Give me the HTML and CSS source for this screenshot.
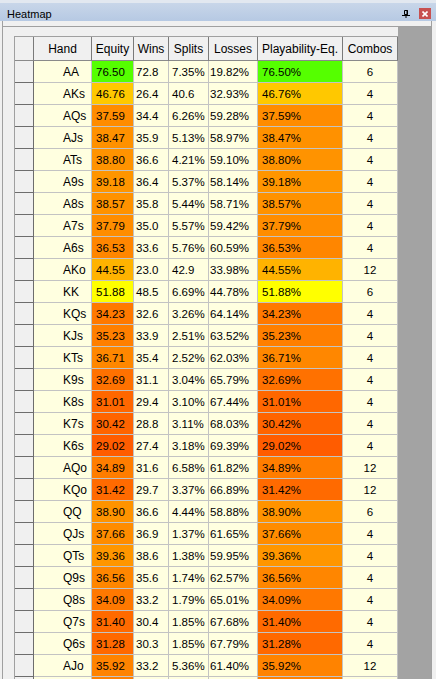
FILE: index.html
```html
<!DOCTYPE html>
<html>
<head>
<meta charset="utf-8">
<link rel="stylesheet" href="styles.css">
</head>
<body>
<div class="topstrip"></div>
<div class="titlebar">
  <span class="title">Heatmap</span>
  <svg class="pin" width="8" height="8" viewBox="0 0 8 8"><path d="M2.5 0.5h3v4h-3z" fill="none" stroke="#000"/><path d="M5 0v5" stroke="#000" stroke-width="1"/><path d="M0 5.5h8M4 6v2" stroke="#000"/></svg>
  <span class="close"><svg width="6" height="6" viewBox="0 0 6 6"><path d="M0.5 0.5l5 5M5.5 0.5l-5 5" stroke="#fff" stroke-width="1.6"/></svg></span>
</div>
<div class="frame">
  <div class="gridhost">
    <div class="gridpad">
      <div class="table">
        <div class="h corner"></div><div class="h">Hand</div><div class="h">Equity</div><div class="h">Wins</div><div class="h">Splits</div><div class="h">Losses</div><div class="h">Playability-Eq.</div><div class="h">Combos</div>

        <div class="rh"></div><div class="c hand">AA</div><div class="c eq" style="background:#55ff00">76.50</div><div class="c w">72.8</div><div class="c s">7.35%</div><div class="c l">19.82%</div><div class="c eq" style="background:#55ff00">76.50%</div><div class="c cb">6</div>
        <div class="rh"></div><div class="c hand">AKs</div><div class="c eq" style="background:#ffc800">46.76</div><div class="c w">26.4</div><div class="c s">40.6</div><div class="c l">32.93%</div><div class="c eq" style="background:#ffc800">46.76%</div><div class="c cb">4</div>
        <div class="rh"></div><div class="c hand">AQs</div><div class="c eq" style="background:#ff8c00">37.59</div><div class="c w">34.4</div><div class="c s">6.26%</div><div class="c l">59.28%</div><div class="c eq" style="background:#ff8c00">37.59%</div><div class="c cb">4</div>
        <div class="rh"></div><div class="c hand">AJs</div><div class="c eq" style="background:#ff9100">38.47</div><div class="c w">35.9</div><div class="c s">5.13%</div><div class="c l">58.97%</div><div class="c eq" style="background:#ff9100">38.47%</div><div class="c cb">4</div>
        <div class="rh"></div><div class="c hand">ATs</div><div class="c eq" style="background:#ff9300">38.80</div><div class="c w">36.6</div><div class="c s">4.21%</div><div class="c l">59.10%</div><div class="c eq" style="background:#ff9300">38.80%</div><div class="c cb">4</div>
        <div class="rh"></div><div class="c hand">A9s</div><div class="c eq" style="background:#ff9500">39.18</div><div class="c w">36.4</div><div class="c s">5.37%</div><div class="c l">58.14%</div><div class="c eq" style="background:#ff9500">39.18%</div><div class="c cb">4</div>
        <div class="rh"></div><div class="c hand">A8s</div><div class="c eq" style="background:#ff9200">38.57</div><div class="c w">35.8</div><div class="c s">5.44%</div><div class="c l">58.71%</div><div class="c eq" style="background:#ff9200">38.57%</div><div class="c cb">4</div>
        <div class="rh"></div><div class="c hand">A7s</div><div class="c eq" style="background:#ff8d00">37.79</div><div class="c w">35.0</div><div class="c s">5.57%</div><div class="c l">59.42%</div><div class="c eq" style="background:#ff8d00">37.79%</div><div class="c cb">4</div>
        <div class="rh"></div><div class="c hand">A6s</div><div class="c eq" style="background:#ff8600">36.53</div><div class="c w">33.6</div><div class="c s">5.76%</div><div class="c l">60.59%</div><div class="c eq" style="background:#ff8600">36.53%</div><div class="c cb">4</div>
        <div class="rh"></div><div class="c hand">AKo</div><div class="c eq" style="background:#ffb300">44.55</div><div class="c w">23.0</div><div class="c s">42.9</div><div class="c l">33.98%</div><div class="c eq" style="background:#ffb300">44.55%</div><div class="c cb">12</div>
        <div class="rh"></div><div class="c hand">KK</div><div class="c eq" style="background:#ffff00">51.88</div><div class="c w">48.5</div><div class="c s">6.69%</div><div class="c l">44.78%</div><div class="c eq" style="background:#ffff00">51.88%</div><div class="c cb">6</div>
        <div class="rh"></div><div class="c hand">KQs</div><div class="c eq" style="background:#ff7900">34.23</div><div class="c w">32.6</div><div class="c s">3.26%</div><div class="c l">64.14%</div><div class="c eq" style="background:#ff7900">34.23%</div><div class="c cb">4</div>
        <div class="rh"></div><div class="c hand">KJs</div><div class="c eq" style="background:#ff7f00">35.23</div><div class="c w">33.9</div><div class="c s">2.51%</div><div class="c l">63.52%</div><div class="c eq" style="background:#ff7f00">35.23%</div><div class="c cb">4</div>
        <div class="rh"></div><div class="c hand">KTs</div><div class="c eq" style="background:#ff8700">36.71</div><div class="c w">35.4</div><div class="c s">2.52%</div><div class="c l">62.03%</div><div class="c eq" style="background:#ff8700">36.71%</div><div class="c cb">4</div>
        <div class="rh"></div><div class="c hand">K9s</div><div class="c eq" style="background:#ff7100">32.69</div><div class="c w">31.1</div><div class="c s">3.04%</div><div class="c l">65.79%</div><div class="c eq" style="background:#ff7100">32.69%</div><div class="c cb">4</div>
        <div class="rh"></div><div class="c hand">K8s</div><div class="c eq" style="background:#ff6700">31.01</div><div class="c w">29.4</div><div class="c s">3.10%</div><div class="c l">67.44%</div><div class="c eq" style="background:#ff6700">31.01%</div><div class="c cb">4</div>
        <div class="rh"></div><div class="c hand">K7s</div><div class="c eq" style="background:#ff6400">30.42</div><div class="c w">28.8</div><div class="c s">3.11%</div><div class="c l">68.03%</div><div class="c eq" style="background:#ff6400">30.42%</div><div class="c cb">4</div>
        <div class="rh"></div><div class="c hand">K6s</div><div class="c eq" style="background:#ff5c00">29.02</div><div class="c w">27.4</div><div class="c s">3.18%</div><div class="c l">69.39%</div><div class="c eq" style="background:#ff5c00">29.02%</div><div class="c cb">4</div>
        <div class="rh"></div><div class="c hand">AQo</div><div class="c eq" style="background:#ff7d00">34.89</div><div class="c w">31.6</div><div class="c s">6.58%</div><div class="c l">61.82%</div><div class="c eq" style="background:#ff7d00">34.89%</div><div class="c cb">12</div>
        <div class="rh"></div><div class="c hand">KQo</div><div class="c eq" style="background:#ff6a00">31.42</div><div class="c w">29.7</div><div class="c s">3.37%</div><div class="c l">66.89%</div><div class="c eq" style="background:#ff6a00">31.42%</div><div class="c cb">12</div>
        <div class="rh"></div><div class="c hand">QQ</div><div class="c eq" style="background:#ff9300">38.90</div><div class="c w">36.6</div><div class="c s">4.44%</div><div class="c l">58.88%</div><div class="c eq" style="background:#ff9300">38.90%</div><div class="c cb">6</div>
        <div class="rh"></div><div class="c hand">QJs</div><div class="c eq" style="background:#ff8c00">37.66</div><div class="c w">36.9</div><div class="c s">1.37%</div><div class="c l">61.65%</div><div class="c eq" style="background:#ff8c00">37.66%</div><div class="c cb">4</div>
        <div class="rh"></div><div class="c hand">QTs</div><div class="c eq" style="background:#ff9600">39.36</div><div class="c w">38.6</div><div class="c s">1.38%</div><div class="c l">59.95%</div><div class="c eq" style="background:#ff9600">39.36%</div><div class="c cb">4</div>
        <div class="rh"></div><div class="c hand">Q9s</div><div class="c eq" style="background:#ff8600">36.56</div><div class="c w">35.6</div><div class="c s">1.74%</div><div class="c l">62.57%</div><div class="c eq" style="background:#ff8600">36.56%</div><div class="c cb">4</div>
        <div class="rh"></div><div class="c hand">Q8s</div><div class="c eq" style="background:#ff7800">34.09</div><div class="c w">33.2</div><div class="c s">1.79%</div><div class="c l">65.01%</div><div class="c eq" style="background:#ff7800">34.09%</div><div class="c cb">4</div>
        <div class="rh"></div><div class="c hand">Q7s</div><div class="c eq" style="background:#ff6a00">31.40</div><div class="c w">30.4</div><div class="c s">1.85%</div><div class="c l">67.68%</div><div class="c eq" style="background:#ff6a00">31.40%</div><div class="c cb">4</div>
        <div class="rh"></div><div class="c hand">Q6s</div><div class="c eq" style="background:#ff6900">31.28</div><div class="c w">30.3</div><div class="c s">1.85%</div><div class="c l">67.79%</div><div class="c eq" style="background:#ff6900">31.28%</div><div class="c cb">4</div>
        <div class="rh"></div><div class="c hand">AJo</div><div class="c eq" style="background:#ff8300">35.92</div><div class="c w">33.2</div><div class="c s">5.36%</div><div class="c l">61.40%</div><div class="c eq" style="background:#ff8300">35.92%</div><div class="c cb">12</div>
        <div class="rh"></div><div class="c hand"></div><div class="c eq" style="background:#ff8000"></div><div class="c w"></div><div class="c s"></div><div class="c l"></div><div class="c eq" style="background:#ff8000"></div><div class="c cb"></div>
      </div>
    </div>
    <div class="gridfill"></div>
  </div>
</div>
</body>
</html>
```

FILE: styles.css
```css
html, body {
  margin: 0;
  padding: 0;
}
body {
  width: 436px;
  height: 679px;
  overflow: hidden;
  background: #f0f0f0;
  font-family: "Liberation Sans", Arial, sans-serif;
  color: #000;
}
.topstrip {
  height: 3px;
  background: #e2e8f0;
}
.titlebar {
  height: 18px;
  background: linear-gradient(to bottom, #c8d6e9, #b6c9e3);
  display: flex;
  align-items: flex-start;
  padding: 0 5px 0 7px;
}
.title {
  font-size: 11px;
  line-height: 13px;
  padding-top: 5px;
}
.pin {
  margin-left: auto;
  margin-top: 7px;
}
.close {
  margin-left: 9px;
  margin-top: 5px;
  width: 12px;
  height: 11px;
  background: #c75050;
  display: flex;
  align-items: center;
  justify-content: center;
}
.frame {
  margin-left: 2px;
  width: 430px;
  height: 658px;
  box-sizing: border-box;
  border-left: 1px solid #a0a0a0;
  border-right: 1px solid #a0a0a0;
  padding-top: 5px;
}
.gridhost {
  border-top: 1px solid #a0a0a0;
  display: flex;
  height: 100%;
}
.gridpad {
  width: 395px;
  box-sizing: border-box;
  padding: 9px 0 0 11px;
}
.gridfill {
  flex: 1;
  background: #a3a3a3;
}
.table {
  display: grid;
  grid-template-columns: 19px 58px 42px 35px 40px 49px 85px 55px;
  border-left: 1px solid #a0a0a0;
  border-top: 1px solid #a0a0a0;
}
.h {
  height: 24px;
  box-sizing: border-box;
  background: #f0f0f0;
  border-right: 1px solid #7a7a7a;
  border-bottom: 1px solid #8a8a8a;
  font-size: 12px;
  display: flex;
  align-items: center;
  justify-content: center;
  white-space: nowrap;
}
.rh {
  height: 22px;
  box-sizing: border-box;
  background: #f0f0f0;
  border-right: 1px solid #6d6d6d;
  border-bottom: 1px solid #6d6d6d;
}
.c {
  height: 22px;
  box-sizing: border-box;
  background: #ffffe0;
  border-right: 1px solid #c3c3c3;
  border-bottom: 1px solid #c3c3c3;
  font-size: 11.5px;
  display: flex;
  align-items: center;
  white-space: nowrap;
  overflow: hidden;
}
.hand { padding-left: 29px; font-size: 12px; }
.eq { padding-left: 4px; }
.w { padding-left: 2px; }
.s { padding-left: 3px; }
.l { padding-left: 1px; }
.cb { justify-content: center; }
```
